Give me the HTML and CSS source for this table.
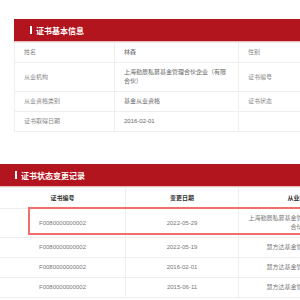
FILE: index.html
```html
<!DOCTYPE html>
<html lang="zh-CN">
<head>
<meta charset="utf-8">
<title>证书信息</title>
<link rel="stylesheet" href="styles.css">
</head>
<body>
<div class="page">
  <section class="card card-info">
    <div class="card-head"><span class="bar"></span>证书基本信息</div>
    <table class="info">
      <colgroup><col class="c1"><col class="c2"><col class="c3"><col class="c4"></colgroup>
      <tr><td class="lbl">姓名</td><td>林森</td><td class="lbl">性别</td><td></td></tr>
      <tr><td class="lbl">从业机构</td><td>上海勤辰私募基金管理合伙企业（有限合伙）</td><td class="lbl">证书编号</td><td></td></tr>
      <tr><td class="lbl">从业资格类别</td><td>基金从业资格</td><td class="lbl">证书状态</td><td></td></tr>
      <tr><td class="lbl">证书取得日期</td><td>2016-02-01</td><td class="lbl"></td><td></td></tr>
    </table>
  </section>

  <section class="card card-log">
    <div class="card-head"><span class="bar"></span>证书状态变更记录</div>
    <div class="log-wrap">
      <table class="log">
        <colgroup><col class="l1"><col class="l2"><col class="l3"></colgroup>
        <tr class="th"><td>证书编号</td><td>变更日期</td><td>从业机构</td></tr>
        <tr><td>F0080000000002</td><td>2022-05-29</td><td>上海勤辰私募基金管理合伙企业（有限合伙）</td></tr>
        <tr><td>F0080000000002</td><td>2022-05-19</td><td>慧方达基金管理有限公司</td></tr>
        <tr><td>F0080000000002</td><td>2016-02-01</td><td>慧方达基金管理有限公司</td></tr>
        <tr><td>F0080000000002</td><td>2015-06-11</td><td>慧方达基金管理有限公司</td></tr>
      </table>
      <div class="mark"></div>
    </div>
  </section>
</div>
</body>
</html>
```

FILE: styles.css
```css
* { box-sizing: border-box; }
html, body { margin: 0; padding: 0; }
body {
  background: #fff;
  font-family: "Liberation Sans", "Noto Sans CJK SC", sans-serif;
  color: #666;
  width: 300px;
  height: 300px;
  overflow: hidden;
}
.page { padding-top: 19px; }
.card { background: #fff; }
.card-info { margin-left: 14px; width: 340px; }
.card-log { margin-top: 32px; margin-left: -1px; width: 361px; }
.card-head {
  height: 23px;
  background: #b3151e;
  color: #fff;
  font-weight: bold;
  font-size: 8px;
  display: flex;
  align-items: center;
  padding-left: 16px;
  border-bottom: 1px solid #e9b9bb;
}
.bar {
  display: inline-block;
  width: 2px;
  height: 8px;
  background: #fff;
  margin-right: 4px;
}
table { border-collapse: collapse; table-layout: fixed; }
td {
  font-size: 6px;
  line-height: 9px;
  border: 1px solid #eee;
  vertical-align: middle;
}
.info { width: 340px; }
.info td { padding: 5px 9px; color: #666; }
.info td.lbl { color: #888; }
.info .c1 { width: 100px; }
.info .c2 { width: 124px; }
.info .c3 { width: 100px; }
.info .c4 { width: 16px; }
.log-wrap { position: relative; }
.log { width: 361px; }
.log td { padding: 5px 9px; text-align: center; color: #777; }
.log tr.th td { color: #333; font-weight: bold; padding: 5.5px 9px; }
.log .l1 { width: 126px; }
.log .l2 { width: 113px; }
.log .l3 { width: 122px; }
.mark {
  position: absolute;
  left: 29px;
  top: 20px;
  width: 290px;
  height: 28px;
  border: 2px solid #f26d6d;
  pointer-events: none;
}
```
